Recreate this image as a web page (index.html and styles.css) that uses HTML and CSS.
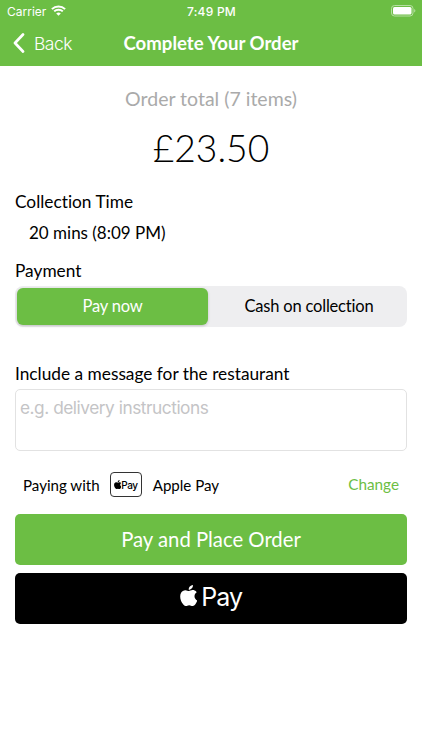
FILE: index.html
```html
<!DOCTYPE html>
<html lang="en">
<head>
<meta charset="utf-8">
<title>Complete Your Order</title>
<link rel="stylesheet" href="styles.css">
</head>
<body>
<svg class="defs" aria-hidden="true">
  <symbol id="apple" viewBox="2 0 20 24">
    <path d="M12.15 6.9c-.95 0-2.42-1.08-3.96-1.04-2.04.03-3.91 1.18-4.96 3.01-2.12 3.68-.55 9.1 1.52 12.09 1.01 1.45 2.21 3.09 3.79 3.04 1.52-.07 2.09-.99 3.94-.99 1.83 0 2.35.99 3.96.95 1.64-.03 2.68-1.48 3.68-2.95 1.16-1.69 1.64-3.33 1.66-3.42-.04-.01-3.18-1.22-3.22-4.86-.03-3.04 2.48-4.49 2.6-4.56-1.43-2.09-3.62-2.32-4.39-2.38-2-.16-3.68 1.09-4.61 1.09zM15.53 3.83c.84-1.01 1.4-2.43 1.25-3.83-1.21.05-2.66.81-3.53 1.82-.78.9-1.45 2.34-1.27 3.71 1.34.1 2.71-.69 3.56-1.7z"/>
  </symbol>
</svg>
<header class="header">
  <div class="status">
    <div class="status-left">
      <span>Carrier</span>
      <svg class="wifi" viewBox="0 0 15 11">
        <path d="M.9 4.1a9.4 9.4 0 0 1 13.2 0M3.2 6.4a6.1 6.1 0 0 1 8.6 0"/>
        <path class="wifi-dot" d="M7.5 10.8 5.2 8.5a3.3 3.3 0 0 1 4.6 0z"/>
      </svg>
    </div>
    <span class="clock">7:49 PM</span>
    <svg class="battery" viewBox="0 0 25 12">
      <rect class="battery-shell" x=".5" y=".5" width="21.5" height="10.5" rx="3"/>
      <rect x="2" y="2" width="18.5" height="7.5" rx="1.5"/>
      <path class="battery-cap" d="M23.2 4c1.6.6 1.6 3 0 3.6z"/>
    </svg>
  </div>
  <nav class="nav">
    <a class="back"><svg viewBox="0 0 12 20"><path d="M10 1.5 2 10l8 8.5"/></svg><span>Back</span></a>
    <h1>Complete Your Order</h1>
  </nav>
</header>
<main>
  <p class="total-label">Order total (7 items)</p>
  <p class="total">£23.50</p>
  <h2>Collection Time</h2>
  <p class="time">20 mins (8:09 PM)</p>
  <h2>Payment</h2>
  <div class="segments">
    <div class="segment selected"><span>Pay now</span></div>
    <div class="segment"><span>Cash on collection</span></div>
  </div>
  <h2 class="message-label">Include a message for the restaurant</h2>
  <div class="message"><span>e.g. delivery instructions</span></div>
  <div class="method">
    <span class="paying">Paying with</span>
    <div class="badge"><svg><use href="#apple"/></svg><span>Pay</span></div>
    <span class="method-name">Apple Pay</span>
    <a class="change">Change</a>
  </div>
  <div class="button place"><span>Pay and Place Order</span></div>
  <div class="button apple-pay"><svg><use href="#apple"/></svg><span>Pay</span></div>
</main>
</body>
</html>
```
FILE: styles.css
```css
* { box-sizing: border-box; }
body { margin: 0; width: 422px; height: 750px; overflow: hidden; background: #fff; color: #000; font-family: Lato, sans-serif; font-size: 17px; font-variant-ligatures: none; }
h1, h2, p { margin: 0; font-weight: 400; }
span, a { white-space: nowrap; }
.defs { display: none; }

.header { height: 65.5px; background: #6cbe44; color: #fff; }
.status { display: grid; grid-template-columns: 1fr auto 1fr; align-items: center; height: 22px; padding: 0 6px 0 7px; font-family: Inter, sans-serif; font-size: 12px; }
.status-left { display: flex; align-items: center; gap: 5px; }
.wifi { width: 15px; height: 11px; margin-bottom: 2px; fill: none; stroke: #fff; stroke-width: 2; }
.wifi-dot { fill: #fff; stroke: none; }
.clock { font-weight: 500; letter-spacing: .25px; }
.battery { width: 25px; height: 12px; justify-self: end; fill: #fff; }
.battery-shell { fill: none; stroke: #b6dfa2; }
.battery-cap { fill: #b6dfa2; }
.nav { display: grid; grid-template-columns: 1fr auto 1fr; align-items: center; height: 42px; padding: 0 13px; }
.back { display: flex; align-items: center; gap: 9px; font: 300 17.5px Inter, sans-serif; letter-spacing: -.5px; }
.back svg { width: 12px; height: 20px; fill: none; stroke: #fff; stroke-width: 2.7; stroke-linecap: round; stroke-linejoin: round; }
.nav h1 { font-size: 18.6px; line-height: 22px; font-weight: 700; }

main { padding: 0 15px; }
.total-label { margin-top: 21.5px; height: 24px; line-height: 24px; font-size: 19.5px; text-align: center; color: #aaa; }
.total { margin-top: 13px; height: 48px; line-height: 48px; font-size: 37.2px; font-weight: 300; text-align: center; }
h2 { font-size: 17.3px; height: 24px; line-height: 24px; }
.total + h2 { margin-top: 18px; }
.time { margin: 7px 0 14px 14px; height: 24px; line-height: 24px; font-size: 17px; }
.segments { display: flex; height: 41px; margin-top: 3px; padding: 2px; border-radius: 8px; background: #eeeef0; font-size: 16.5px; letter-spacing: -.2px; }
.segment { flex: 1; display: flex; align-items: center; justify-content: center; padding: 0 0 1px 5px; border-radius: 6px; }
.selected { flex: 0 0 191px; padding: 0 0 1px; background: #6cbe44; color: #fff; box-shadow: 0 1px 3px #0003; }
.message-label { margin-top: 35px; }
.message { height: 62px; margin-top: 3px; padding: 6px 4px; border: 1px solid #e2e2e2; border-radius: 5px; color: #c4c4c6; font: 17.3px/24px Inter, sans-serif; letter-spacing: -.47px; }
.method { display: flex; align-items: center; height: 25px; margin-top: 21px; padding: 0 8px; font-size: 15.1px; }
.badge { display: flex; align-items: center; justify-content: center; width: 32px; height: 25px; margin: 0 11px 0 10px; border: 1.5px solid #333; border-radius: 4px; font: 500 10px Inter, sans-serif; letter-spacing: -.4px; }
.badge svg { width: 7.5px; height: 9px; margin-bottom: 1px; }
.change { margin-left: auto; margin-bottom: 2px; color: #6cbe44; font-size: 15.3px; }
.button { display: flex; align-items: center; justify-content: center; height: 51px; border-radius: 5px; color: #fff; }
.place { margin-top: 16.5px; background: #6cbe44; font-size: 20.3px; }
.apple-pay { margin-top: 8px; padding-bottom: 3px; gap: 4px; background: #000; font: 400 25px Inter, sans-serif; letter-spacing: -.9px; }
.apple-pay svg { width: 17.5px; height: 21px; margin-bottom: 3px; fill: #fff; }
```
